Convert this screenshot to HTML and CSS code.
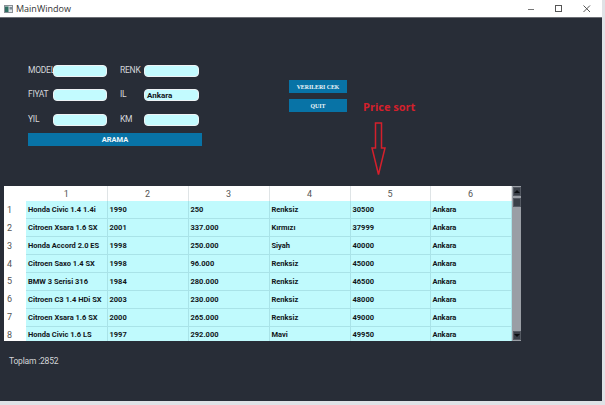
FILE: index.html
```html
<!DOCTYPE html>
<html lang="tr">
<head>
<meta charset="utf-8">
<title>MainWindow</title>
<link rel="stylesheet" href="styles.css">
</head>
<body>
<div class="window">
  <header class="titlebar">
    <svg class="app-icon" width="9" height="8" viewBox="0 0 9 8"><rect x="0.5" y="0.5" width="8" height="7" fill="#dfe3e6" stroke="#8a9096"/><rect x="1" y="1.5" width="3.5" height="5.5" fill="#2f6f62"/><rect x="5.5" y="2" width="2.5" height="2.5" fill="#7d8b96"/></svg>
    <span class="app-title">MainWindow</span>
    <div class="controls">
      <svg class="ctl" width="28" height="12" viewBox="0 0 28 12"><path d="M11 6.5h6" stroke="#777" fill="none"/></svg>
      <svg class="ctl" width="28" height="12" viewBox="0 0 28 12"><rect x="10.5" y="2.5" width="6" height="6" stroke="#555" fill="none"/></svg>
      <svg class="ctl" width="28" height="12" viewBox="0 0 28 12"><path d="M10.5 2.5l6.5 6.5M17 2.5l-6.5 6.5" stroke="#555" fill="none"/></svg>
    </div>
  </header>
  <main class="content">
    <section class="top">
      <div class="search">
        <div class="fields">
          <label class="lbl">MODEL</label><div class="inp"></div>
          <label class="lbl lbl-r">RENK</label><div class="inp"></div>
          <label class="lbl">FIYAT</label><div class="inp"></div>
          <label class="lbl lbl-r">IL</label><div class="inp">Ankara</div>
          <label class="lbl">YIL</label><div class="inp"></div>
          <label class="lbl lbl-r">KM</label><div class="inp"></div>
        </div>
        <button class="btn btn-wide">ARAMA</button>
      </div>
      <div class="actions">
        <button class="btn">VERILERI CEK</button>
        <button class="btn">QUIT</button>
      </div>
    </section>
    <div class="note">Price sort</div>
    <svg class="arrow" width="15" height="54" viewBox="0 0 15 54"><path d="M4.5 1H10.5V26H14L7.5 52.5L1 26H4.5Z" fill="none" stroke="#d4202c" stroke-width="1.5"/></svg>
    <section class="grid-wrap">
      <table class="data">
        <colgroup><col class="c0"><col class="c1"><col class="c2"><col class="c3"><col class="c4"><col class="c5"><col class="c6"></colgroup>
        <thead><tr><th class="corner"></th><th>1</th><th>2</th><th>3</th><th>4</th><th>5</th><th>6</th></tr></thead>
        <tbody>
          <tr><th>1</th><td>Honda Civic 1.4 1.4i</td><td>1990</td><td>250</td><td>Renksiz</td><td>30500</td><td>Ankara</td></tr>
          <tr><th>2</th><td>Citroen Xsara 1.6 SX</td><td>2001</td><td>337.000</td><td>Kırmızı</td><td>37999</td><td>Ankara</td></tr>
          <tr><th>3</th><td>Honda Accord 2.0 ES</td><td>1998</td><td>250.000</td><td>Siyah</td><td>40000</td><td>Ankara</td></tr>
          <tr><th>4</th><td>Citroen Saxo 1.4 SX</td><td>1998</td><td>96.000</td><td>Renksiz</td><td>45000</td><td>Ankara</td></tr>
          <tr><th>5</th><td>BMW 3 Serisi 316</td><td>1984</td><td>280.000</td><td>Renksiz</td><td>46500</td><td>Ankara</td></tr>
          <tr><th>6</th><td>Citroen C3 1.4 HDi SX</td><td>2003</td><td>230.000</td><td>Renksiz</td><td>48000</td><td>Ankara</td></tr>
          <tr><th>7</th><td>Citroen Xsara 1.6 SX</td><td>2000</td><td>265.000</td><td>Renksiz</td><td>49000</td><td>Ankara</td></tr>
          <tr><th>8</th><td>Honda Civic 1.6 LS</td><td>1997</td><td>292.000</td><td>Mavi</td><td>49950</td><td>Ankara</td></tr>
        </tbody>
      </table>
      <div class="scrollbar">
        <div class="sb-btn"><span class="tri-up"></span></div>
        <div class="sb-handle"></div>
        <div class="sb-btn sb-end"><span class="tri-down"></span></div>
      </div>
    </section>
    <p class="total">Toplam :2852</p>
  </main>
</div>
</body>
</html>
```
FILE: styles.css
```css
* { box-sizing: border-box; }
html, body { margin: 0; padding: 0; }
body {
  width: 605px;
  height: 405px;
  overflow: hidden;
  background: #dfe2e6;
  font-family: Roboto, "Open Sans", sans-serif;
}
.window {
  width: 602px;
  height: 401px;
  display: flex;
  flex-direction: column;
  background: #282d37;
}
.titlebar {
  height: 18px;
  flex: none;
  display: flex;
  align-items: center;
  padding-left: 4px;
  background: #fff;
  border-bottom: 1px solid #6d7076;
}
.app-icon { flex: none; }
.app-title {
  margin-left: 3px;
  font-family: "Open Sans", sans-serif;
  font-size: 9px;
  color: #333;
}
.controls { margin-left: auto; display: flex; margin-right: 1.5px; }
.ctl { display: block; }
.content {
  flex: 1;
  position: relative;
  display: flex;
  flex-direction: column;
}
.top {
  height: 168px;
  flex: none;
  padding: 47px 0 0 28px;
  display: flex;
}
.search { width: 174px; }
.fields {
  display: grid;
  grid-template-columns: 25px 54px 37px 55px;
  row-gap: 12.3px;
  grid-auto-rows: 12px;
}
.lbl {
  font-size: 8.5px;
  letter-spacing: -0.25px;
  line-height: 10px;
  color: #d3d6da;
  white-space: nowrap;
}
.lbl-r { margin-left: 13px; }
.inp {
  background: #c3fbff;
  border: 1px solid #eef3f5;
  border-radius: 4px;
  font-size: 8px;
  font-weight: 700;
  line-height: 12px;
  padding-left: 2px;
  color: #10151a;
}
.btn {
  display: block;
  border: 0;
  padding: 0;
  background: #0873a6;
  color: #eef6fa;
  font-family: "Liberation Serif", serif;
  font-size: 5.8px;
  font-weight: 700;
  height: 13px;
  width: 58px;
}
.btn-wide {
  width: 174px;
  margin-top: 7.5px;
  font-family: Roboto, sans-serif;
  font-size: 7.5px;
}
.actions {
  margin-left: 87px;
  padding-top: 15px;
  display: flex;
  flex-direction: column;
  gap: 6px;
}
.note {
  position: absolute;
  left: 363px;
  top: 80px;
  color: #d4202c;
  font-family: "Open Sans", sans-serif;
  font-size: 11px;
  font-weight: 700;
  line-height: 18px;
  white-space: nowrap;
}
.arrow { position: absolute; left: 371px; top: 104px; }
.grid-wrap {
  margin-left: 4px;
  width: 517px;
  height: 155px;
  flex: none;
  display: flex;
  overflow: hidden;
}
.data {
  width: 507px;
  table-layout: fixed;
  border-collapse: collapse;
  flex: none;
  align-self: flex-start;
  background: #c0fafd;
}
.c0 { width: 22px; }
.c1, .c2, .c3, .c4, .c6 { width: 81px; }
.c5 { width: 80px; }
.data thead tr { height: 15px; }
.data tbody tr { height: 17.86px; }
.data th {
  background: #fff;
  font-weight: 400;
  font-size: 9px;
  color: #555;
  padding: 0;
  border-right: 1px solid #dfe4e6;
}
.data tbody th {
  text-align: left;
  padding-left: 3px;
  border: 0;
}
.data .corner { border: 0; }
.data td {
  font-size: 7.5px;
  font-weight: 700;
  color: #11161a;
  padding: 0 0 0 2px;
  white-space: nowrap;
  border-right: 1px solid #a9e3e8;
  border-bottom: 1px solid #a9e3e8;
}
.scrollbar {
  width: 10px;
  height: 155px;
  flex: none;
  background: #9a9ea5;
  display: flex;
  flex-direction: column;
  padding: 1px;
  gap: 2px;
}
.sb-btn, .sb-handle {
  width: 8px;
  height: 9px;
  flex: none;
  background: #3a3f48;
  border: 1px solid #555a63;
  display: flex;
  align-items: center;
  justify-content: center;
}
.sb-end { margin-top: auto; }
.tri-up, .tri-down { width: 0; height: 0; border-left: 3px solid transparent; border-right: 3px solid transparent; }
.tri-up { border-bottom: 3px solid #0c0e12; }
.tri-down { border-top: 3px solid #0c0e12; }
.total {
  margin: 13px 0 0 9px;
  font-size: 8.5px;
  letter-spacing: -0.2px;
  line-height: 14px;
  color: #d3d5d8;
}
```
